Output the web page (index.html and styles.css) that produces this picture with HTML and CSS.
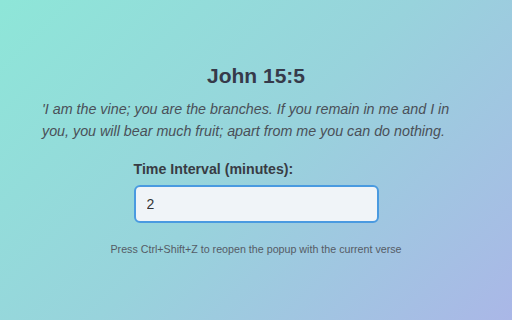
FILE: index.html
```html
<!DOCTYPE html>
<html>
<head>
<meta charset="utf-8">
<link rel="stylesheet" href="styles.css">
</head>
<body>
<div class="page">
  <h1 class="ref">John 15:5</h1>
  <p class="verse">'I am the vine; you are the branches. If you remain in me and I in you, you will bear much fruit; apart from me you can do nothing.</p>
  <div class="field">
    <label class="label" for="interval">Time Interval (minutes):</label>
    <input class="input" id="interval" type="text" value="2">
  </div>
  <p class="hint">Press Ctrl+Shift+Z to reopen the popup with the current verse</p>
</div>
</body>
</html>
```
FILE: styles.css
```css
html, body {
  margin: 0;
  height: 100%;
}
body {
  background: linear-gradient(135deg, #8ee6d8 0%, #98d3dc 50%, #aab7e7 100%);
  font-family: "Liberation Sans", Arial, sans-serif;
}
.page {
  display: flex;
  flex-direction: column;
  align-items: center;
  padding-top: 64px;
}
.ref {
  margin: 0;
  font-size: 21px;
  font-weight: bold;
  color: #363a4a;
  line-height: 24px;
}
.verse {
  margin: 10px 0 0 0;
  width: 428px;
  font-size: 14.3px;
  font-style: italic;
  line-height: 22px;
  color: #4a5058;
}
.field {
  display: flex;
  flex-direction: column;
  width: 245px;
  margin-top: 18px;
}
.label {
  font-size: 14.2px;
  font-weight: bold;
  color: #383c44;
  line-height: 18px;
}
.input {
  margin-top: 7px;
  box-sizing: border-box;
  height: 38px;
  border: 2px solid #4a9ae0;
  border-radius: 6px;
  background: #f0f4f8;
  padding: 0 11px;
  font-family: "Liberation Sans", Arial, sans-serif;
  font-size: 14px;
  color: #333;
  outline: none;
}
.hint {
  margin: 20px 0 0 0;
  font-size: 10.7px;
  color: #555c66;
}
```
